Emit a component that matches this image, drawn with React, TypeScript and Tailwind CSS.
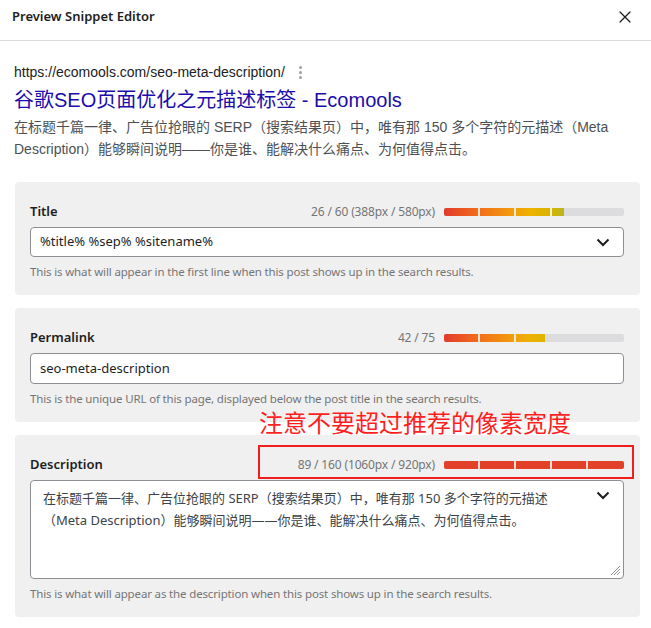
import { X } from "lucide-react";

const UI = { fontFamily: '"Noto Sans", "Noto Sans CJK SC", sans-serif' };
const SERP = { fontFamily: '"Liberation Sans", Arial, "Noto Sans CJK SC", sans-serif' };

function Chevron() {
  return (
    <svg width="14" height="9" viewBox="0 0 14 9" className="text-[#1e1e1e]">
      <path d="M1.5 1.5 L7 7 L12.5 1.5" fill="none" stroke="currentColor" strokeWidth="2" />
    </svg>
  );
}

function ScoreBar({ ratio, over }: { ratio: number; over?: boolean }) {
  const fill = Math.min(ratio, 1) * 180;
  return (
    <div className="relative w-[180px] h-[8px] rounded-[2px] bg-[#dcdcde] overflow-hidden">
      <div className="absolute left-0 top-0 h-full overflow-hidden" style={{ width: fill }}>
        {over ? (
          <div className="w-[180px] h-full bg-[#e3402a]" />
        ) : (
          <div className="w-[180px] h-full bg-[linear-gradient(to_right,#e23b2c,#f2701a_20%,#f29c0e_38%,#eeb200_48%,#d9b400_58%,#bdb51c_66%,#8cc43a_100%)]" />
        )}
        <div className="absolute top-0 left-[34px] w-[2px] h-full bg-white/80" />
        <div className="absolute top-0 left-[70px] w-[2px] h-full bg-white/80" />
        <div className="absolute top-0 left-[106px] w-[2px] h-full bg-white/80" />
        <div className="absolute top-0 left-[142px] w-[2px] h-full bg-white/80" />
      </div>
    </div>
  );
}

function FieldCard({
  label,
  counter,
  ratio,
  over,
  help,
  children,
}: {
  label: string;
  counter: string;
  ratio: number;
  over?: boolean;
  help: string;
  children: React.ReactNode;
}) {
  return (
    <div className="ml-[15px] mr-[11px] rounded-[4px] bg-[#f0f0f1] pl-[15px] pr-[16px] pt-[20px] pb-[14px]">
      <div className="flex items-center justify-between h-[20px]">
        <span className="text-[13px] font-semibold text-[#1e1e1e]">{label}</span>
        <div className="flex items-center gap-[9px]">
          <span className="text-[12px] text-[#757575] tracking-[-0.15px]">{counter}</span>
          <ScoreBar ratio={ratio} over={over} />
        </div>
      </div>
      <div className="mt-[5px]">{children}</div>
      <p className="mt-[6px] text-[11.5px] leading-[18px] text-[#757575] tracking-[-0.15px]">{help}</p>
    </div>
  );
}

export default function App() {
  return (
    <div className="relative w-[651px] h-[628px] bg-white overflow-hidden" style={UI}>
      {/* Header */}
      <div className="flex items-center justify-between h-[41px] border-b border-[#dcdcde] pl-[12px] pr-[16px] pb-[6px]">
        <h1 className="text-[13px] font-semibold text-[#1e1e1e]">Preview Snippet Editor</h1>
        <X className="w-[20px] h-[20px] text-[#1e1e1e]" strokeWidth={1.5} />
      </div>

      {/* Snippet preview */}
      <div className="px-[14px] pt-[21px]" style={SERP}>
        <div className="flex items-center gap-[14px] h-[20px]">
          <span className="text-[14px] text-[#202124]">https://ecomools.com/seo-meta-description/</span>
          <div className="flex flex-col gap-[2px]">
            <span className="w-[3px] h-[3px] rounded-full bg-[#9aa0a6]" />
            <span className="w-[3px] h-[3px] rounded-full bg-[#9aa0a6]" />
            <span className="w-[3px] h-[3px] rounded-full bg-[#9aa0a6]" />
          </div>
        </div>
        <div className="mt-[5px] text-[20px] leading-[26px] text-[#1a0dab]">
          谷歌SEO页面优化之元描述标签 - Ecomools
        </div>
        <p className="mt-[3px] text-[14px] leading-[22px] text-[#4d5156]">
          在标题千篇一律、广告位抢眼的 SERP（搜索结果页）中，唯有那 150 多个字符的元描述（Meta Description）能够瞬间说明——你是谁、能解决什么痛点、为何值得点击。
        </p>
      </div>

      <div className="mt-[22px] flex flex-col gap-[13px]">
        <FieldCard
          label="Title"
          counter="26 / 60 (388px / 580px)"
          ratio={388 / 580}
          help="This is what will appear in the first line when this post shows up in the search results."
        >
          <div className="flex items-center justify-between h-[30px] rounded-[4px] border border-[#8c8f94] bg-white pl-[9px] pr-[13px]">
            <span className="text-[13px] text-[#1e1e1e]">%title% %sep% %sitename%</span>
            <Chevron />
          </div>
        </FieldCard>

        <FieldCard
          label="Permalink"
          counter="42 / 75"
          ratio={42 / 75}
          help="This is the unique URL of this page, displayed below the post title in the search results."
        >
          <div className="flex items-center h-[31px] rounded-[4px] border border-[#8c8f94] bg-white pl-[9px]">
            <span className="text-[13px] text-[#1e1e1e]">seo-meta-description</span>
          </div>
        </FieldCard>

        <FieldCard
          label="Description"
          counter="89 / 160 (1060px / 920px)"
          ratio={1}
          over
          help="This is what will appear as the description when this post shows up in the search results."
        >
          <div className="relative h-[99px] rounded-[4px] border border-[#8c8f94] bg-white pl-[12px] pr-[40px] pt-[6px]">
            <p className="text-[13px] leading-[22px] text-[#3c434a]">
              在标题千篇一律、广告位抢眼的 SERP（搜索结果页）中，唯有那 150 多个字符的元描述
              <br />
              （Meta Description）能够瞬间说明——你是谁、能解决什么痛点、为何值得点击。
            </p>
            <div className="absolute right-[13px] top-[10px]">
              <Chevron />
            </div>
            <svg className="absolute right-[2px] bottom-[2px]" width="12" height="12" viewBox="0 0 12 12">
              <path d="M11 2 L2 11 M11 5 L5 11 M11 8 L8 11" stroke="#8c8f94" strokeWidth="1" />
            </svg>
          </div>
        </FieldCard>
      </div>

      {/* Annotation overlay */}
      <div className="absolute left-[259px] top-[406px] text-[24px] leading-[32px] text-[#ff1f1f]" style={{ fontFamily: '"Noto Sans CJK SC", sans-serif' }}>
        注意不要超过推荐的像素宽度
      </div>
      <div className="absolute left-[258px] top-[445px] w-[376px] h-[34px] border-2 border-[#f21d1d]" />
    </div>
  );
}
